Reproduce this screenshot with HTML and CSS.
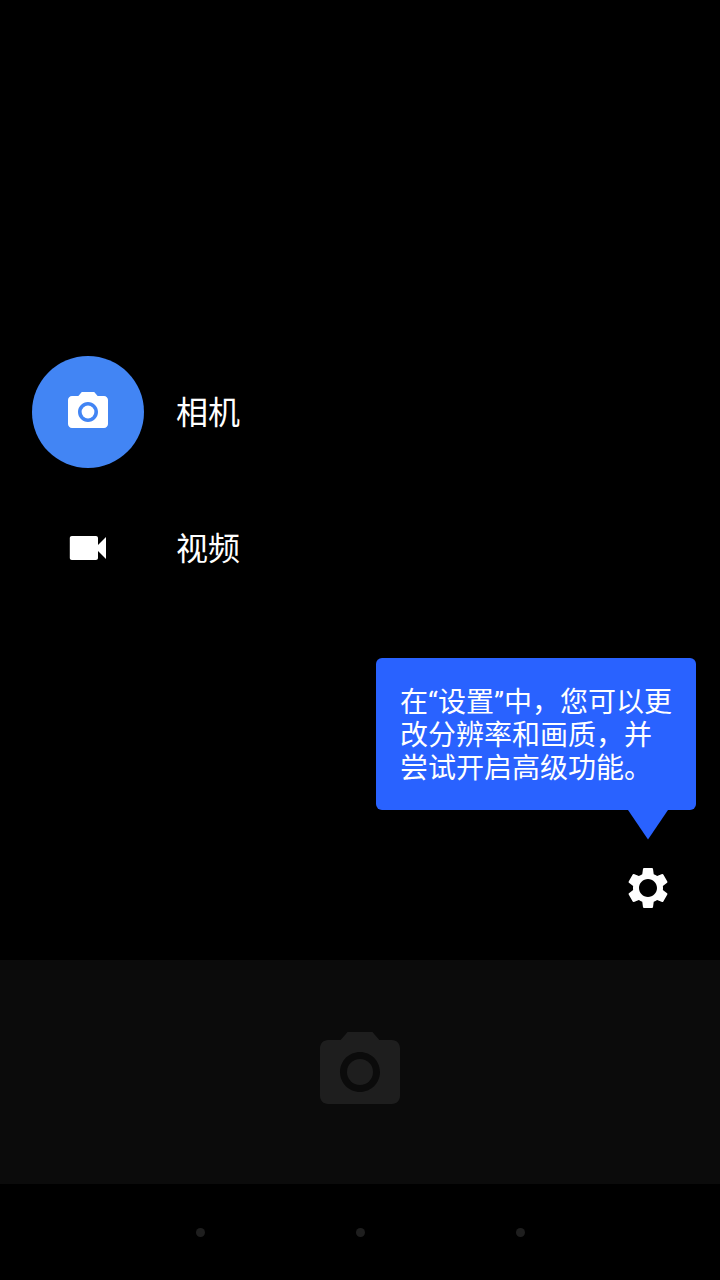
FILE: index.html
```html
<!DOCTYPE html>
<html lang="zh-CN">
<head>
<meta charset="utf-8">
<title>相机</title>
<link rel="stylesheet" href="styles.css">
</head>
<body>
<main class="screen">
  <section class="drawer">
    <nav class="modes">
      <a class="mode mode-active">
        <span class="mode-badge">
          <svg class="icon" viewBox="0 0 24 24"><circle cx="12" cy="12" r="3.2"/><path d="M8.900 2L7.170 4H4c-1.100 0-2 .9-2 2v12c0 1.100.9 2 2 2h16c1.100 0 2-.9 2-2V6c0-1.100-.9-2-2-2h-3.170L15.100 2H8.900zm3.100 15c-2.760 0-5-2.240-5-5s2.240-5 5-5 5 2.240 5 5-2.240 5-5 5z"/></svg>
        </span>
        <span class="mode-label">相机</span>
      </a>
      <a class="mode">
        <span class="mode-badge">
          <svg class="icon" viewBox="0 0 24 24"><path d="M17 10.500V7c0-.55-.45-1-1-1H3.900c-.55 0-1 .45-1 1v10c0 .55.45 1 1 1H16c.55 0 1-.45 1-1v-3.500l4 4v-11l-4 4z"/></svg>
        </span>
        <span class="mode-label">视频</span>
      </a>
    </nav>
    <div class="settings">
      <div class="tip">
        <p class="tip-text">在“设置”中，您可以更<br>改分辨率和画质，并<br>尝试开启高级功能。</p>
        <svg class="tip-arrow" viewBox="0 0 40 30"><path d="M0 0h40L20 29.500z"/></svg>
      </div>
      <svg class="icon gear" viewBox="0 0 24 24"><path d="M19.430 12.980c.04-.32.070-.64.070-.98s-.03-.66-.07-.98l2.110-1.650c.19-.15.24-.42.12-.64l-2-3.460c-.12-.22-.39-.3-.61-.22l-2.490 1c-.52-.4-1.080-.73-1.690-.98l-.38-2.650C14.460 2.180 14.250 2 14 2h-4c-.25 0-.46.18-.49.42l-.38 2.650c-.61.25-1.170.59-1.690.98l-2.490-1c-.23-.09-.49 0-.61.22l-2 3.460c-.13.22-.07.49.12.64l2.110 1.650c-.04.32-.07.650-.07.98s.03.66.07.98l-2.110 1.650c-.19.15-.24.42-.12.64l2 3.460c.12.22.39.3.61.22l2.490-1c.52.4 1.080.73 1.690.98l.38 2.650c.03.24.24.42.49.42h4c.25 0 .46-.18.49-.42l.38-2.650c.61-.25 1.170-.59 1.690-.98l2.490 1c.23.09.49 0 .61-.22l2-3.460c.12-.22.07-.49-.12-.64l-2.110-1.650zM12 16.500c-2.480 0-4.500-2.020-4.500-4.500s2.020-4.500 4.500-4.500 4.500 2.020 4.500 4.500-2.020 4.500-4.500 4.500z"/></svg>
    </div>
  </section>
  <footer class="shutter">
    <svg class="shutter-icon" viewBox="0 0 24 24"><circle cx="12" cy="12" r="3.250"/><path d="M8.900 2L7.170 4H4c-1.100 0-2 .9-2 2v12c0 1.100.9 2 2 2h16c1.100 0 2-.9 2-2V6c0-1.100-.9-2-2-2h-3.170L15.100 2H8.900zm3.100 15c-2.760 0-5-2.240-5-5s2.240-5 5-5 5 2.240 5 5-2.240 5-5 5z"/></svg>
  </footer>
  <div class="navbar"><i class="dot"></i><i class="dot"></i><i class="dot"></i></div>
</main>
</body>
</html>
```
FILE: styles.css
```css
* { box-sizing: border-box; }
body { margin: 0; background: #000; color: #fff; font-family: Roboto, "Noto Sans CJK SC", sans-serif; }
.screen { width: 720px; height: 1280px; display: flex; flex-direction: column; overflow: hidden; }
.drawer { height: 960px; padding: 344px 24px 48px 0; display: flex; flex-direction: column; justify-content: space-between; }
.modes { padding-left: 32px; }
.mode { display: flex; align-items: center; gap: 32px; height: 136px; }
.mode-badge { width: 112px; height: 112px; border-radius: 50%; display: flex; align-items: center; justify-content: center; }
.mode-active .mode-badge { background: #4285f4; }
.mode-label { padding-top: 2px; font-size: 32px; line-height: 48px; }
.icon { width: 48px; height: 48px; fill: currentColor; display: block; }
.settings { display: flex; flex-direction: column; align-items: flex-end; gap: 54px; }
.tip { position: relative; width: 320px; height: 152px; padding: 28px 24px 0; border-radius: 6px; background: #2962ff; }
.tip-text { margin: 0; font-size: 28px; line-height: 33px; white-space: nowrap; }
.tip-arrow { position: absolute; left: 252px; top: 152px; width: 40px; height: 30px; fill: #2962ff; }
.gear { margin-right: 24px; }
.shutter { height: 224px; background: #0b0b0b; display: flex; align-items: center; justify-content: center; }
.shutter-icon { width: 96px; height: 96px; fill: #1e1e1e; }
.navbar { height: 96px; padding: 1px 0 0 1px; display: flex; justify-content: center; align-items: center; gap: 151px; }
.dot { width: 9px; height: 9px; border-radius: 50%; background: #1e1e1e; }
```
